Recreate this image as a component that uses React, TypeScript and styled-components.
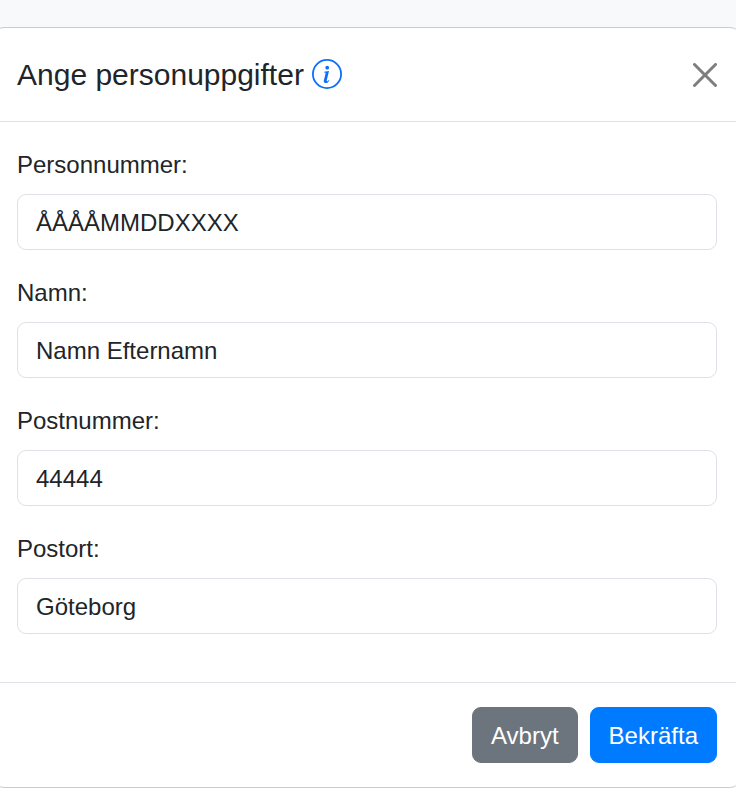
import React from "react";
import styled, { createGlobalStyle } from "styled-components";

const GlobalStyle = createGlobalStyle`
  *, *::before, *::after { box-sizing: border-box; }
  body {
    margin: 0;
    background: #fff;
    color: #212529;
    font: 24px/1.5 "Liberation Sans", Arial, sans-serif;
  }
`;

const Page = styled.div`
  display: flex;
  flex-direction: column;
  align-items: center;
  height: 796px;
  overflow: hidden;
  background: linear-gradient(#f7f9fb 40px, #fff 40px);
  padding-top: 27px;
`;

const Modal = styled.form`
  flex: none;
  width: 750px;
  margin-left: -2px;
  border: 1px solid #cbcbcb;
  border-radius: 12px;
  background: #fff;
`;

const Header = styled.header`
  display: flex;
  align-items: center;
  justify-content: space-between;
  padding: 24px;
  border-bottom: 1px solid #dee2e6;
`;

const Title = styled.h1`
  display: flex;
  align-items: center;
  gap: 8px;
  margin: 0;
  font-size: 30px;
  font-weight: 400;
  line-height: 45px;
`;

const InfoIcon = styled.svg`
  width: 30px;
  height: 30px;
  fill: #0d6efd;
  margin-top: -1px;
`;

const CloseButton = styled.button`
  display: flex;
  padding: 0;
  border: 0;
  background: none;
  opacity: 0.5;

  svg {
    width: 24px;
    height: 24px;
  }
`;

const Body = styled.div`
  padding: 24px;
`;

const Field = styled.label`
  display: flex;
  flex-direction: column;
  gap: 11px;
  padding-top: 1px;
  margin-bottom: 24px;
`;

const Input = styled.input`
  width: 100%;
  height: 56px;
  padding: 10px 18px 8px;
  border: 1px solid #dee2e6;
  border-radius: 9px;
  background: #fff;
  color: inherit;
  font: inherit;
  outline: 0;
`;

const Footer = styled.footer`
  display: flex;
  justify-content: flex-end;
  gap: 12px;
  padding: 24px;
  border-top: 1px solid #dee2e6;
`;

const Button = styled.button<{ $color: string }>`
  height: 56px;
  padding: 10px 18px 8px;
  border: 1px solid ${(p) => p.$color};
  border-radius: 9px;
  background: ${(p) => p.$color};
  color: #fff;
  font: inherit;
`;

const fields = [
  { label: "Personnummer:", value: "ÅÅÅÅMMDDXXXX" },
  { label: "Namn:", value: "Namn Efternamn" },
  { label: "Postnummer:", value: "44444" },
  { label: "Postort:", value: "Göteborg" },
];

export default function App() {
  return (
    <Page>
      <GlobalStyle />
      <Modal>
        <Header>
          <Title>
            Ange personuppgifter
            <InfoIcon viewBox="0 0 30 30">
              <circle cx="15" cy="15" r="14.1" fill="none" stroke="#0d6efd" strokeWidth="1.8" />
              <circle cx="15.2" cy="8.7" r="1.85" />
              <path d="M12.2 12.7 17 12l-2.2 9.1c-.2.9 0 1.2.4 1.2.5 0 1-.5 1.6-1.3l.6.4c-1 1.7-2.2 2.6-3.7 2.6-1.6 0-2.2-1.1-1.8-2.8l1.6-6.5c.2-.8 0-1.2-.6-1.2h-.9z" />
            </InfoIcon>
          </Title>
          <CloseButton type="button" aria-label="Stäng">
            <svg viewBox="0 0 16 16">
              <path d="M.293.293a1 1 0 0 1 1.414 0L8 6.586 14.293.293a1 1 0 1 1 1.414 1.414L9.414 8l6.293 6.293a1 1 0 0 1-1.414 1.414L8 9.414l-6.293 6.293a1 1 0 0 1-1.414-1.414L6.586 8 .293 1.707a1 1 0 0 1 0-1.414z" />
            </svg>
          </CloseButton>
        </Header>
        <Body>
          {fields.map((field) => (
            <Field key={field.label}>
              {field.label}
              <Input defaultValue={field.value} />
            </Field>
          ))}
        </Body>
        <Footer>
          <Button type="button" $color="#6c757d">Avbryt</Button>
          <Button type="button" $color="#007bff">Bekräfta</Button>
        </Footer>
      </Modal>
    </Page>
  );
}
